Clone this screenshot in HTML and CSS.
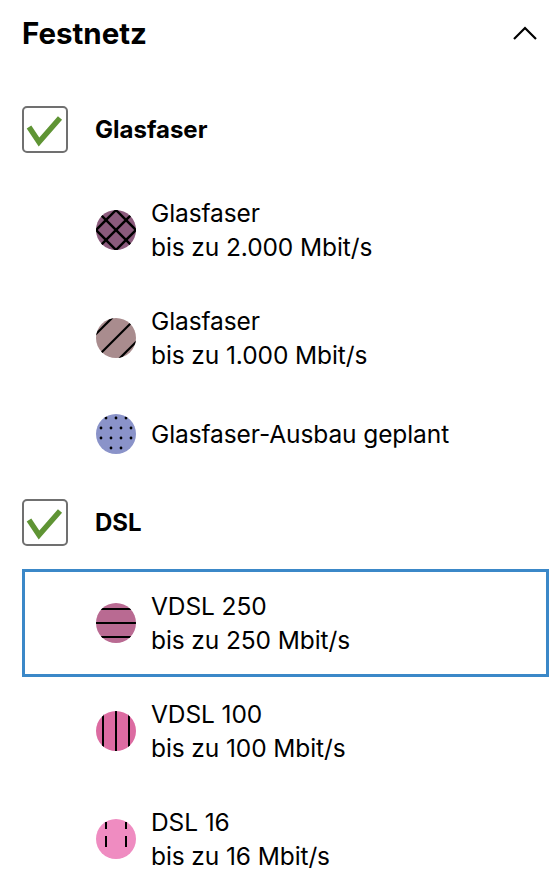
FILE: index.html
```html
<!DOCTYPE html>
<html lang="de">
<head>
<meta charset="utf-8">
<link rel="stylesheet" href="styles.css">
</head>
<body>
<div class="panel">
  <div class="header">
    <h2 class="title">Festnetz</h2>
    <svg class="chevron" width="24" height="14" viewBox="0 0 24 14"><polyline points="1,13 12,2 23,13" fill="none" stroke="#000" stroke-width="2.2"/></svg>
  </div>

  <div class="group">
    <div class="check-row">
      <span class="checkbox"><svg width="42" height="42" viewBox="0 0 42 42"><polyline points="5,18 15,33 36,9" fill="none" stroke="#5f9434" stroke-width="5.5"/></svg></span>
      <span class="group-label">Glasfaser</span>
    </div>
    <div class="items">
      <div class="item">
        <svg class="dot" width="40" height="40" viewBox="0 0 40 40">
          <defs><clipPath id="c1"><circle cx="20" cy="20" r="20"/></clipPath></defs>
          <g clip-path="url(#c1)">
            <rect width="40" height="40" fill="#8b5a7c"/>
            <g stroke="#000" stroke-width="2.4">
              <line x1="-10" y1="10" x2="30" y2="50"/><line x1="0" y1="0" x2="40" y2="40"/><line x1="10" y1="-10" x2="50" y2="30"/>
              <line x1="-10" y1="30" x2="30" y2="-10"/><line x1="0" y1="40" x2="40" y2="0"/><line x1="10" y1="50" x2="50" y2="10"/>
            </g>
          </g>
        </svg>
        <div class="text"><span>Glasfaser</span><span>bis zu 2.000 Mbit/s</span></div>
      </div>
      <div class="item">
        <svg class="dot" width="40" height="40" viewBox="0 0 40 40">
          <defs><clipPath id="c2"><circle cx="20" cy="20" r="20"/></clipPath></defs>
          <g clip-path="url(#c2)">
            <rect width="40" height="40" fill="#a98c8e"/>
            <g stroke="#000" stroke-width="2.2">
              <line x1="-10" y1="26" x2="26" y2="-10"/><line x1="2" y1="38" x2="38" y2="2"/><line x1="14" y1="50" x2="50" y2="14"/>
            </g>
          </g>
        </svg>
        <div class="text"><span>Glasfaser</span><span>bis zu 1.000 Mbit/s</span></div>
      </div>
      <div class="item single">
        <svg class="dot" width="40" height="40" viewBox="0 0 40 40">
          <defs><clipPath id="c3"><circle cx="20" cy="20" r="20"/></clipPath></defs>
          <g clip-path="url(#c3)">
            <rect width="40" height="40" fill="#8a93c9"/>
            <g fill="#000">
              <circle cx="10" cy="4" r="1.4"/><circle cx="20" cy="4" r="1.4"/><circle cx="30" cy="4" r="1.4"/>
              <circle cx="5" cy="14" r="1.4"/><circle cx="15" cy="14" r="1.4"/><circle cx="25" cy="14" r="1.4"/><circle cx="35" cy="14" r="1.4"/>
              <circle cx="5" cy="24" r="1.4"/><circle cx="15" cy="24" r="1.4"/><circle cx="25" cy="24" r="1.4"/><circle cx="35" cy="24" r="1.4"/>
              <circle cx="15" cy="34" r="1.4"/><circle cx="25" cy="34" r="1.4"/>
            </g>
          </g>
        </svg>
        <div class="text"><span>Glasfaser-Ausbau geplant</span></div>
      </div>
    </div>
  </div>

  <div class="group">
    <div class="check-row">
      <span class="checkbox"><svg width="42" height="42" viewBox="0 0 42 42"><polyline points="5,18 15,33 36,9" fill="none" stroke="#5f9434" stroke-width="5.5"/></svg></span>
      <span class="group-label">DSL</span>
    </div>
    <div class="items">
      <div class="item selected">
        <svg class="dot" width="40" height="40" viewBox="0 0 40 40">
          <defs><clipPath id="c4"><circle cx="20" cy="20" r="20"/></clipPath></defs>
          <g clip-path="url(#c4)">
            <rect width="40" height="40" fill="#b96a92"/>
            <g stroke="#000" stroke-width="2">
              <line x1="0" y1="6" x2="40" y2="6"/><line x1="0" y1="20" x2="40" y2="20"/><line x1="0" y1="34" x2="40" y2="34"/>
            </g>
          </g>
        </svg>
        <div class="text"><span>VDSL 250</span><span>bis zu 250 Mbit/s</span></div>
      </div>
      <div class="item">
        <svg class="dot" width="40" height="40" viewBox="0 0 40 40">
          <defs><clipPath id="c5"><circle cx="20" cy="20" r="20"/></clipPath></defs>
          <g clip-path="url(#c5)">
            <rect width="40" height="40" fill="#dc6ba1"/>
            <g stroke="#000" stroke-width="2">
              <line x1="7" y1="0" x2="7" y2="40"/><line x1="20" y1="0" x2="20" y2="40"/><line x1="33" y1="0" x2="33" y2="40"/>
            </g>
          </g>
        </svg>
        <div class="text"><span>VDSL 100</span><span>bis zu 100 Mbit/s</span></div>
      </div>
      <div class="item">
        <svg class="dot" width="40" height="40" viewBox="0 0 40 40">
          <defs><clipPath id="c6"><circle cx="20" cy="20" r="20"/></clipPath></defs>
          <g clip-path="url(#c6)">
            <rect width="40" height="40" fill="#ef8cc1"/>
            <g stroke="#000" stroke-width="2">
              <line x1="10" y1="3" x2="10" y2="10"/><line x1="30" y1="3" x2="30" y2="10"/>
              <line x1="10" y1="17" x2="10" y2="28"/><line x1="30" y1="17" x2="30" y2="28"/>
            </g>
          </g>
        </svg>
        <div class="text"><span>DSL 16</span><span>bis zu 16 Mbit/s</span></div>
      </div>
    </div>
  </div>
</div>
</body>
</html>
```
FILE: styles.css
```css
* { box-sizing: border-box; }
html, body { margin: 0; padding: 0; background: #fff; }
body {
  font-family: Inter, "Liberation Sans", sans-serif;
  color: #000;
  overflow: hidden;
}
.panel {
  padding: 0 5px 0 22px;
}
.header {
  height: 66px;
  display: flex;
  align-items: center;
  justify-content: space-between;
  padding-right: 12px;
}
.title {
  margin: 0;
  font-size: 29.5px;
  font-weight: 700;
  letter-spacing: 0;
}
.chevron { display: block; }
.group { display: flex; flex-direction: column; }
.header + .group { margin-top: 40px; }
.check-row {
  display: flex;
  align-items: center;
  height: 47px;
}
.checkbox {
  width: 46px;
  height: 47px;
  border: 2px solid #707070;
  border-radius: 5px;
  display: flex;
  align-items: center;
  justify-content: center;
}
.checkbox svg { display: block; }
.group-label {
  margin-left: 27px;
  font-size: 24px;
  font-weight: 700;
}
.items {
  display: flex;
  flex-direction: column;
  margin-top: 23px;
  margin-bottom: 24px;
}
.item {
  display: flex;
  align-items: center;
  gap: 15px;
  height: 108px;
  padding-left: 74px;
}
.item.single { height: 83px; }
.item.selected {
  border: 3px solid #3b88c8;
  padding-left: 71px;
}
.dot { flex: none; display: block; }
.text {
  display: flex;
  flex-direction: column;
  font-size: 24.5px;
  line-height: 34px;
  letter-spacing: -0.1px;
}
```
